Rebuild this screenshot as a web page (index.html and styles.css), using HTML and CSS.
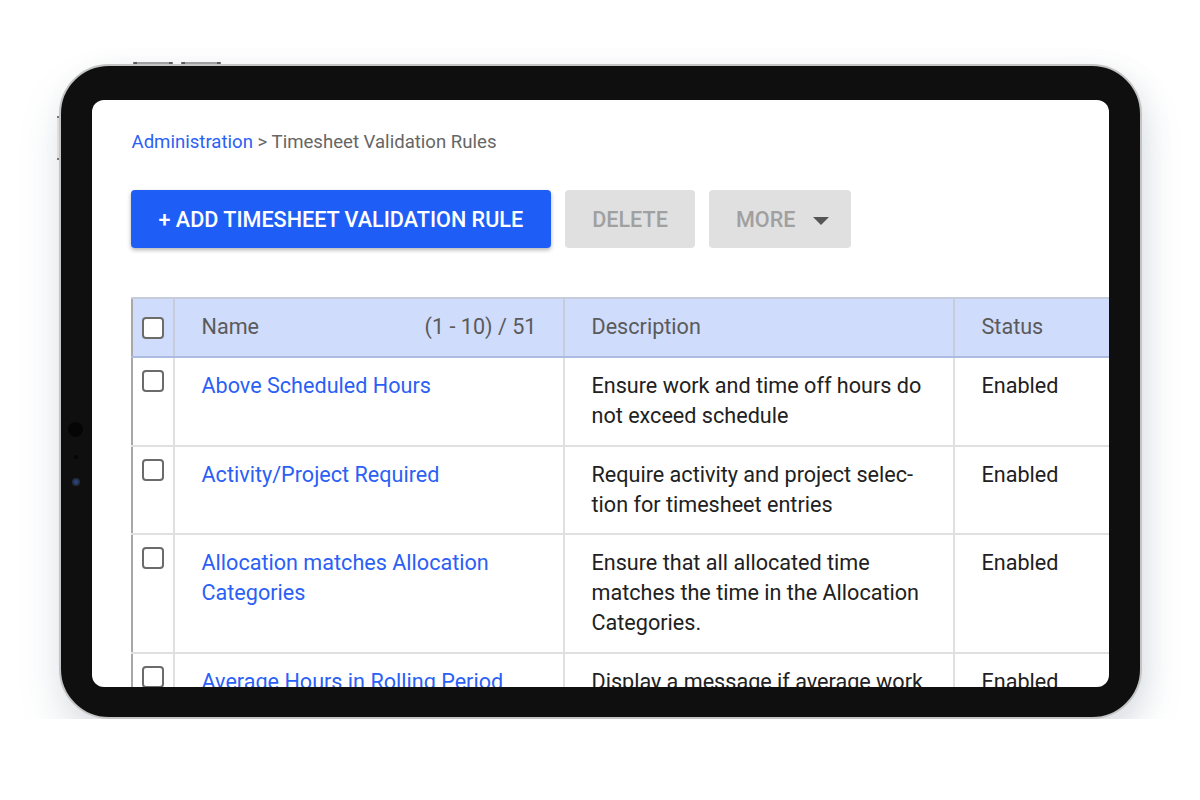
FILE: index.html
```html
<!DOCTYPE html>
<html lang="en">
<head>
<meta charset="UTF-8">
<meta name="viewport" content="width=device-width, initial-scale=1.0">
<title>Timesheet Validation Rules</title>
<link rel="stylesheet" href="styles.css">
</head>
<body>
<div class="device">
    <span class="top-key key-a"></span>
    <span class="top-key key-b"></span>
    <span class="side-key"></span>
    <span class="cam cam-big"></span>
    <span class="cam cam-small"></span>
    <span class="cam cam-lens"></span>

    <div class="screen">
        <div class="breadcrumb"><a href="#">Administration</a> &gt; Timesheet Validation Rules</div>

        <div class="toolbar">
            <button class="btn btn-primary">+ Add Timesheet Validation Rule</button>
            <button class="btn btn-disabled">Delete</button>
            <button class="btn btn-disabled">More <span class="caret"></span></button>
        </div>

        <table class="rules">
            <colgroup>
                <col class="c-check">
                <col class="c-name">
                <col class="c-desc">
                <col class="c-status">
            </colgroup>
            <thead>
                <tr>
                    <th class="check"><span class="box"></span></th>
                    <th><div class="name-head"><span>Name</span><span>(1 - 10) / 51</span></div></th>
                    <th>Description</th>
                    <th>Status</th>
                </tr>
            </thead>
            <tbody>
                <tr>
                    <td class="check"><span class="box"></span></td>
                    <td><a href="#">Above Scheduled Hours</a></td>
                    <td>Ensure work and time off hours do not exceed schedule</td>
                    <td>Enabled</td>
                </tr>
                <tr>
                    <td class="check"><span class="box"></span></td>
                    <td><a href="#">Activity/Project Required</a></td>
                    <td>Require activity and project selec&shy;tion for timesheet entries</td>
                    <td>Enabled</td>
                </tr>
                <tr>
                    <td class="check"><span class="box"></span></td>
                    <td><a href="#">Allocation matches Allocation Categories</a></td>
                    <td>Ensure that all allocated time matches the time in the Allocation Categories.</td>
                    <td>Enabled</td>
                </tr>
                <tr>
                    <td class="check"><span class="box"></span></td>
                    <td><a href="#">Average Hours in Rolling Period</a></td>
                    <td>Display a message if average work hours exceed the limit</td>
                    <td>Enabled</td>
                </tr>
            </tbody>
        </table>
    </div>
</div>
</body>
</html>
```

FILE: styles.css
```css
body {
    margin: 0;
    background: #fff;
    font-family: Roboto, 'Liberation Sans', sans-serif;
    color: #212121;
}

.device {
    position: relative;
    box-sizing: border-box;
    width: 1083px;
    height: 655px;
    margin: 64px auto 0;
    padding: 34px 31px 30px 31px;
    background: #0f0f0f;
    border: 2px solid #c4c4c4;
    border-radius: 50px;
    box-shadow: 0 22px 40px rgba(100, 120, 140, 0.2), 8px 4px 24px rgba(100, 120, 140, 0.08);
}

.top-key {
    position: absolute;
    top: -4px;
    width: 32px;
    height: 2px;
    background: #a0a0a0;
    border-left: 4px solid #5a5a5a;
    border-right: 4px solid #5a5a5a;
    border-radius: 1px;
}
.key-a { left: 72px; }
.key-b { left: 120px; }

.side-key {
    position: absolute;
    left: -4px;
    top: 50px;
    width: 2px;
    height: 40px;
    background: #dedede;
    border-top: 2px solid #777;
    border-bottom: 2px solid #777;
}

.cam {
    position: absolute;
    border-radius: 50%;
}
.cam-big {
    left: 7px;
    top: 356px;
    width: 15px;
    height: 15px;
    background: #050505;
}
.cam-small {
    left: 13px;
    top: 389px;
    width: 4px;
    height: 4px;
    background: #050505;
}
.cam-lens {
    left: 11px;
    top: 412px;
    width: 8px;
    height: 8px;
    background: radial-gradient(circle, #2a4a90 0, #222833 70%);
}

.screen {
    height: 100%;
    background: #fff;
    border-radius: 12px;
    overflow: hidden;
    padding: 30px 0 0 39px;
    box-sizing: border-box;
}

.breadcrumb {
    font-size: 18.6px;
    line-height: 24px;
    color: #666;
    padding-left: 1px;
}
.breadcrumb a {
    color: #2b5ff5;
    text-decoration: none;
}

.toolbar {
    display: flex;
    gap: 14px;
    margin-top: 36px;
}

.btn {
    height: 58px;
    padding: 0 27px;
    border: none;
    border-radius: 4px;
    font-family: Roboto, 'Liberation Sans', sans-serif;
    font-size: 21.6px;
    font-weight: 500;
    text-transform: uppercase;
    display: flex;
    align-items: center;
}

.btn-primary {
    padding: 0 28px;
    background: #1f5ef6;
    color: #fff;
    box-shadow: 0 2px 4px rgba(0, 0, 0, 0.3);
}

.btn-disabled {
    background: #e0e0e0;
    color: #a0a0a0;
}

.caret {
    width: 0;
    height: 0;
    margin-left: 18px;
    margin-right: -5px;
    margin-top: 4px;
    border-left: 8px solid transparent;
    border-right: 8px solid transparent;
    border-top: 8px solid #555;
}

.rules {
    margin-top: 49px;
    border-collapse: collapse;
    table-layout: fixed;
    width: 1022px;
    font-size: 21.6px;
    line-height: 30px;
    border-left: 2px solid #a8a8a8;
    border-top: 2px solid #a8a8a8;
}

.c-check { width: 42px; }
.c-name { width: 390px; }
.c-desc { width: 390px; }
.c-status { width: 200px; }

.rules th, .rules td {
    border: 2px solid #e0e0e0;
    padding: 13px 20px 13.5px 27px;
    text-align: left;
    vertical-align: top;
}

.rules th {
    background: #cfdcfc;
    color: #5a5a5a;
    font-weight: 400;
    vertical-align: middle;
    padding: 13px 26px 14px 27px;
    border-color: #c6ccdb;
    border-bottom-color: #aebbe0;
}

.rules thead tr th:first-child { border-left-color: #a8a8a8; }
.rules td:first-child { border-left-color: #a8a8a8; }

.name-head {
    display: flex;
    justify-content: space-between;
}

.rules a {
    color: #2b5ff5;
    text-decoration: none;
}

.rules .check {
    padding: 12px 0 0 9px;
}
.rules th.check {
    padding: 0 0 0 9px;
}

.box {
    display: block;
    width: 18px;
    height: 18px;
    border: 2px solid #6b6b6b;
    border-radius: 4px;
    background: #fff;
}
```
